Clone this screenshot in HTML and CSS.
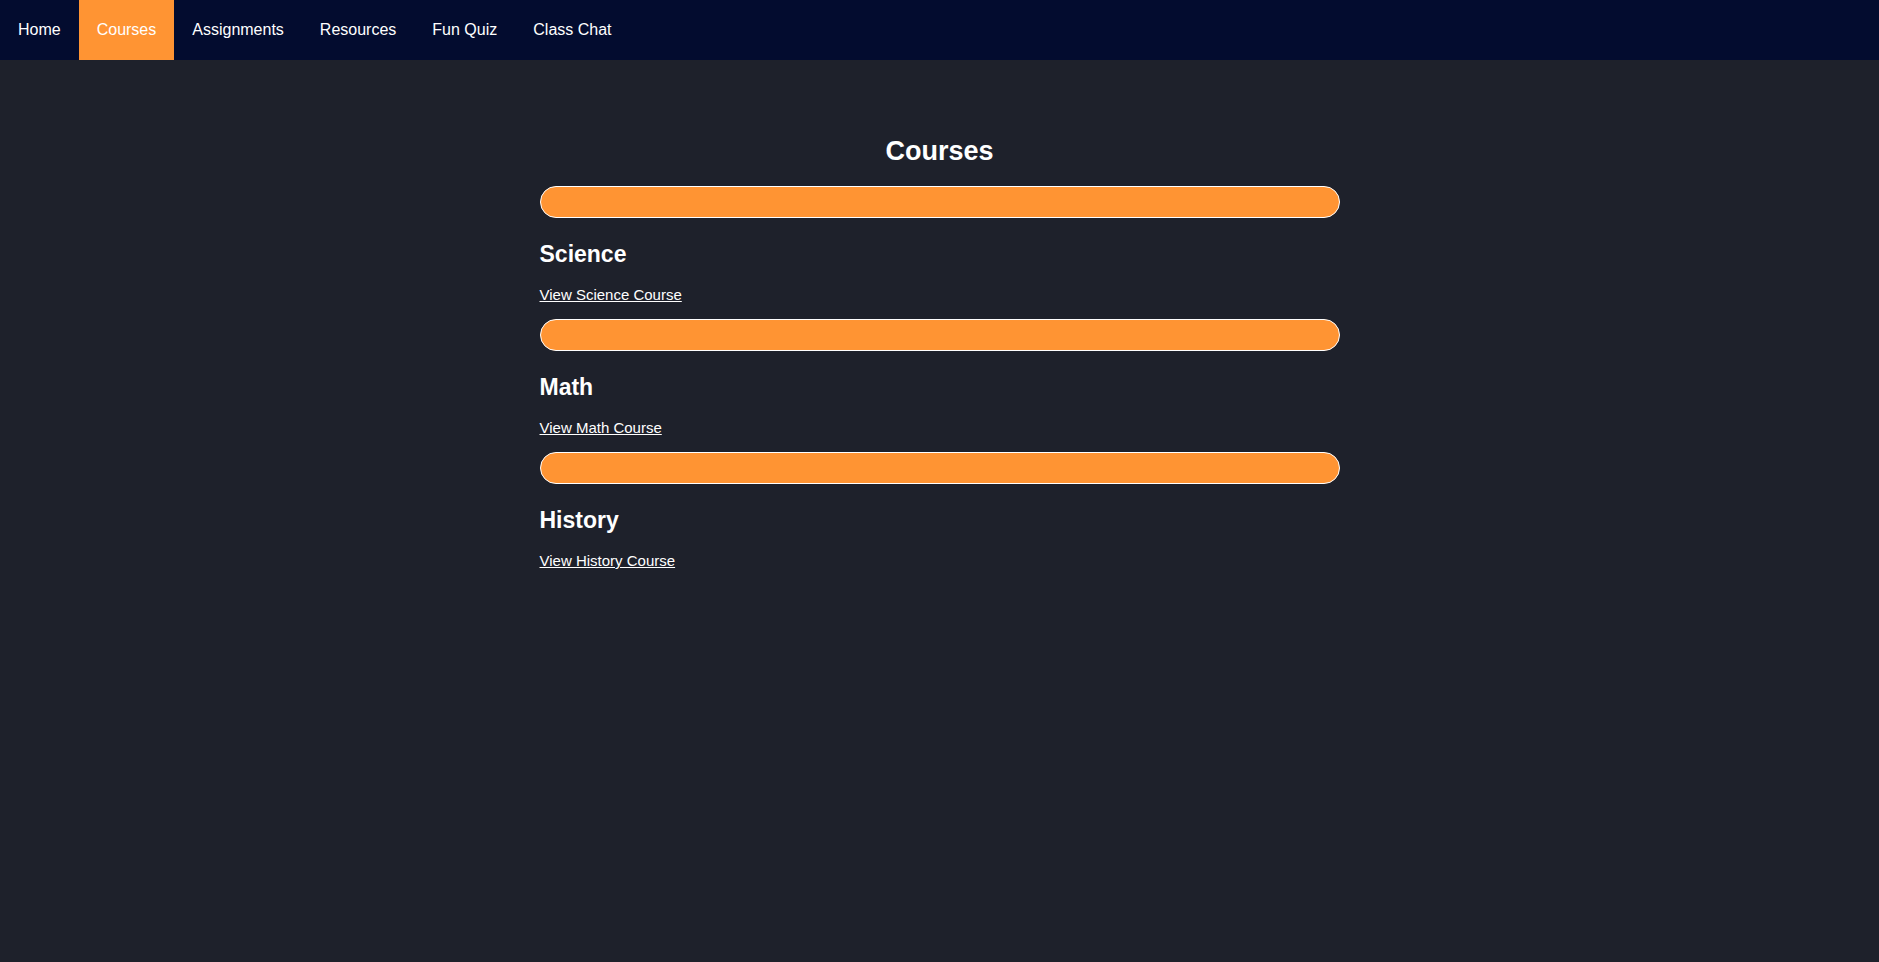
FILE: index.html
```html
<!DOCTYPE html>
<html lang="en">
<head>
  <meta charset="UTF-8">
  <meta name="viewport" content="width=device-width, initial-scale=1.0">
  <title>Courses</title>
  <link rel="stylesheet" href="styles.css">
</head>
<body>
  <nav class="navbar">
    <a href="#">Home</a>
    <a href="#" class="active">Courses</a>
    <a href="#">Assignments</a>
    <a href="#">Resources</a>
    <a href="#">Fun Quiz</a>
    <a href="#">Class Chat</a>
  </nav>
  <div class="container">
    <h1>Courses</h1>
    <div class="course">
      <div class="course-bar"></div>
      <h2>Science</h2>
      <p><a href="#">View Science Course</a></p>
    </div>
    <div class="course">
      <div class="course-bar"></div>
      <h2>Math</h2>
      <p><a href="#">View Math Course</a></p>
    </div>
    <div class="course">
      <div class="course-bar"></div>
      <h2>History</h2>
      <p><a href="#">View History Course</a></p>
    </div>
  </div>
</body>
</html>
```

FILE: styles.css
```css
body {
  font-family: "Liberation Sans", Arial, sans-serif;
  margin: 0;
  padding: 0;
  background-color: #1e212b;
  color: white;
}
.navbar {
  display: flex;
  background-color: #030c2f;
  height: 60px;
}
.navbar a {
  display: flex;
  align-items: center;
  padding: 0 18px;
  color: white;
  text-decoration: none;
  font-size: 16px;
}
.navbar a.active {
  background-color: #ff9433;
}
.container {
  max-width: 800px;
  margin: 0 auto;
  padding: 76px 0 44px;
}
h1 {
  text-align: center;
  font-size: 27px;
  margin: 0 0 19px;
}
.course-bar {
  height: 30px;
  background-color: #ff9433;
  border: 1px solid white;
  border-radius: 16px;
}
h2 {
  font-size: 23px;
  margin: 23px 0 18px;
}
p {
  margin: 16px 0 15px;
}
p a {
  color: white;
  font-size: 15px;
}
```
